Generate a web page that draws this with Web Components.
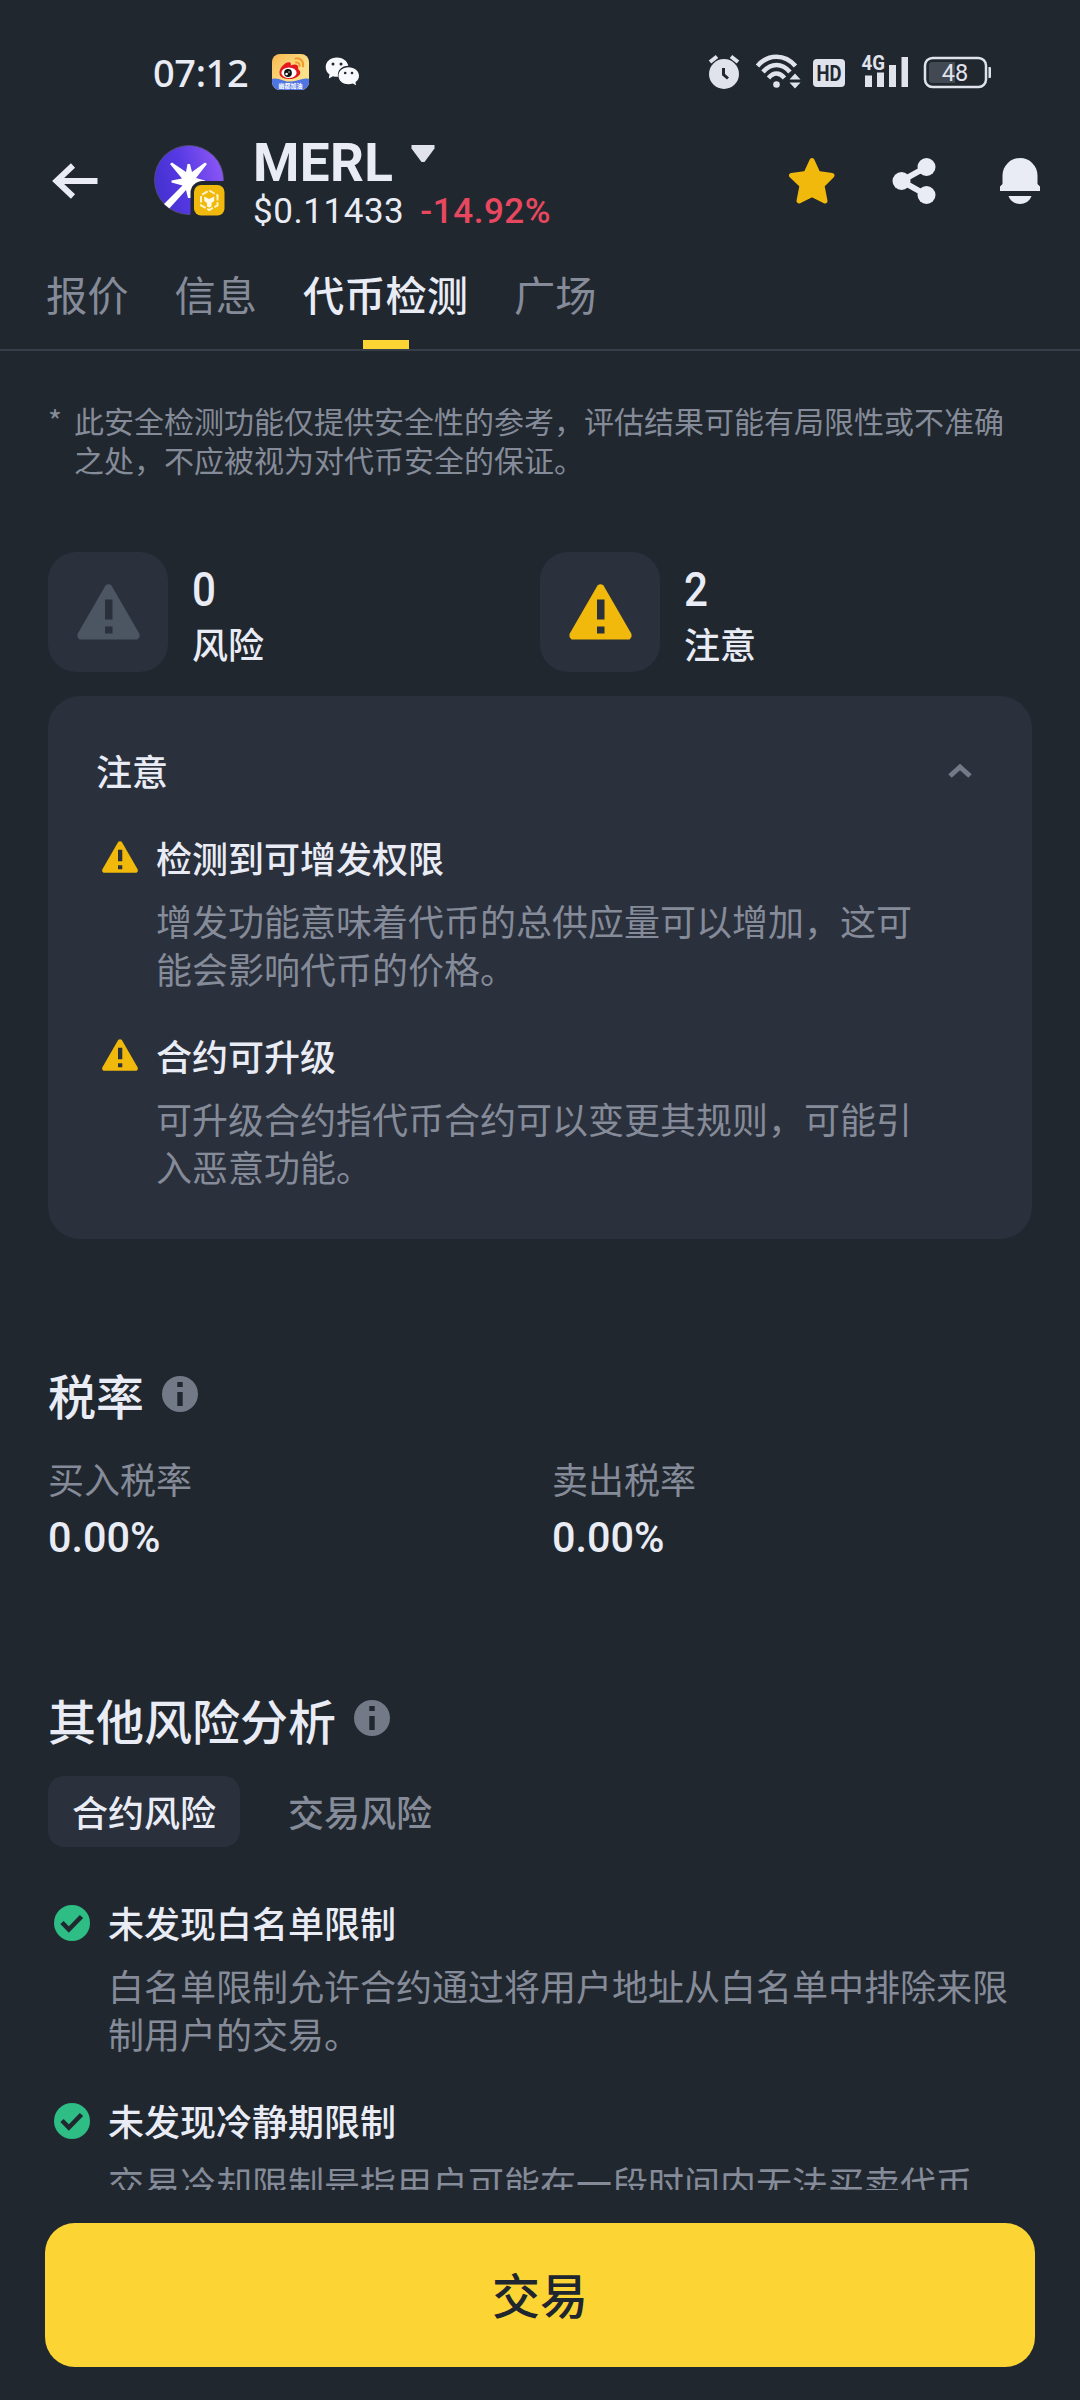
<!DOCTYPE html>
<html lang="zh-CN">
<head>
<meta charset="utf-8">
<title>MERL</title>
<style>
html,body{margin:0;padding:0}
body{width:1080px;height:2400px;overflow:hidden;background:#20272f;color:#e9ecf5;
 --bg:#20272f;--card:#2a303c;--muted:#858b98;--yellow:#f0b90b;--num:Roboto,"Noto Sans CJK SC",sans-serif;
 font-family:"Noto Sans CJK SC",sans-serif}
</style>
</head>
<body>
<token-page></token-page>
<script>
function define(name, css, html){
  const t=document.createElement('template');
  t.innerHTML='<style>*{box-sizing:border-box}svg{display:block;flex:none}'+css+'</style>'+html;
  customElements.define(name,class extends HTMLElement{
    constructor(){super();this.attachShadow({mode:'open'}).appendChild(t.content.cloneNode(true));}
  });
}

define('status-bar',`
:host{display:flex;align-items:center;height:112px;padding:32px 89px 0 153px}
.time{font:500 38px/50px "Noto Sans",sans-serif;letter-spacing:-.4px;width:119px;white-space:nowrap}
.wb{margin-right:16px}
.right{margin-left:auto;display:flex;align-items:center}
`,`
<span class="time">07:12</span>
<svg class="wb" width="37" height="36" viewBox="0 0 37 36">
 <defs><linearGradient id="wg" x1="0" y1="0" x2="1" y2="1"><stop offset="0" stop-color="#f9b84d"/><stop offset=".6" stop-color="#fbe08a"/></linearGradient>
 <clipPath id="wc"><rect width="37" height="36" rx="8"/></clipPath></defs>
 <g clip-path="url(#wc)"><rect width="37" height="36" fill="url(#wg)"/>
 <path d="M0 25C7 23 11 28 18 27.500C25 28 31 23 37 25V36H0Z" fill="#4f74e4"/></g>
 <path d="M7.500 19C7 14 14 7 18 8.500C19 9 19 10 18.700 11.500C22 10 26 10 26 13C26.500 14.500 25.500 15 28 17C30 22 22 25.500 16.500 25C11 24.800 7.500 22.500 7.500 19Z" fill="#e3191e"/>
 <ellipse cx="17" cy="18.800" rx="7.600" ry="5.200" fill="#fff"/><circle cx="16" cy="19" r="3.900" fill="#111"/><circle cx="14.600" cy="20" r="1.300" fill="#fff"/><circle cx="17" cy="18" r=".7" fill="#fff"/>
 <path d="M24 8.500C26.500 8.200 28 10 27.500 12M23.500 4.500C28.500 3.500 32 7.500 31 12.500" fill="none" stroke="#f39a2d" stroke-width="2" stroke-linecap="round"/>
 <text x="18.500" y="34" text-anchor="middle" font-size="6" font-weight="700" fill="#fff">幽都加油</text>
</svg>
<svg width="35" height="32" viewBox="0 0 35 32">
 <path d="M12 1.500C5.500 1.500 .7 5.500 .7 11C.7 14 2 16.500 4.500 18.500L3.800 22.500L8 20.300C10 20.800 12 21 13 20.700C12 14 17 9.800 23.400 9.800C22 4.500 17.500 1.500 12 1.500Z" fill="#f7f9fd"/>
 <path d="M23.500 11.300C17.500 11.300 13.500 15 13.500 19.800C13.500 25 18 28.300 23.500 28.300C25 28.300 26.500 28 27.800 27.500L31 29.300L30.500 26C33 24.500 34 22.300 34 19.800C34 15 29.500 11.300 23.500 11.300Z" fill="#f7f9fd"/>
 <g fill="#20272f"><circle cx="8" cy="8" r="1.500"/><circle cx="16" cy="8" r="1.500"/><circle cx="20.200" cy="17" r="1.300"/><circle cx="27" cy="17" r="1.300"/></g>
</svg>
<div class="right">
<svg width="283" height="40" viewBox="708 52 283 40" fill="#e0e3eb">
 <circle cx="724" cy="74" r="15"/><path d="M710 62L717 56.500M731 56.500L738 62" stroke="#e0e3eb" stroke-width="4"/><path d="M723.500 68V74.500L728 78.500" fill="none" stroke="#20272f" stroke-width="3"/>
 <g fill="none" stroke="#e0e3eb" stroke-width="4.500"><path d="M757.500 66C768 53.500 785 53.500 795.500 66"/><path d="M763 72C771 62.500 782 62.500 790 72"/><path d="M768.500 78C773.500 72 779.500 72 784.500 78"/></g>
 <circle cx="776.500" cy="84.500" r="3.300"/>
 <path d="M789.500 79.500L795 73.500L800.500 79.500ZM789.500 82.500H800.500L795 88.500Z"/>
 <rect x="813" y="59" width="32" height="28" rx="4"/><text x="829" y="81.200" text-anchor="middle" font-family="Roboto,sans-serif" font-weight="700" font-size="22.500" textLength="25" lengthAdjust="spacingAndGlyphs" fill="#20272f">HD</text>
 <text x="861.500" y="70" font-family="Roboto,sans-serif" font-weight="700" font-size="20.500" textLength="23.500" lengthAdjust="spacingAndGlyphs">4G</text>
 <path d="M865 75.500h7v11.500h-7zM877 72.500h7v14.500h-7zM889 65h7v22h-7zM901.500 57h6.500v30h-6.500z"/>
 <rect x="925" y="58" width="61" height="29" rx="7.500" fill="none" stroke="#e0e3eb" stroke-width="2.500"/>
 <path d="M932 62h23v21h-23a3 3 0 0 1-3-3V65a3 3 0 0 1 3-3z" fill="#434953"/>
 <path d="M988.500 67h1.500a1 1 0 0 1 1 1v9a1 1 0 0 1-1 1h-1.500z"/>
 <text x="955" y="80.800" text-anchor="middle" font-family="Roboto,sans-serif" font-size="23.500">48</text>
</svg>
</div>`);

define('token-header',`
:host{display:flex;align-items:center;height:138px;padding-left:52px;font-family:var(--num)}
.logo{margin:-1px 0 0 56px}
.txt{margin-left:27px;height:94px;margin-top:7px}
.name{display:flex;height:53px;gap:18px;font-size:53px;line-height:51px;font-weight:700;letter-spacing:.4px}
.price{display:flex;gap:16px;font-size:35px;line-height:41px;letter-spacing:.55px}
.chg{color:#e8485f;font-weight:500}
.acts{margin-left:auto;display:flex;margin-right:39px}
`,`
<svg width="46" height="38" viewBox="0 0 46 38"><path d="M21 3.500L4.500 19L21 34.500M4.500 19H45.500" fill="none" stroke="#e9ecf5" stroke-width="6"/></svg>
<svg class="logo" width="72" height="72" viewBox="0 0 72 72">
 <defs><linearGradient id="mg" x1="0" y1=".7" x2="1" y2=".4"><stop offset="0" stop-color="#4430cf"/><stop offset=".45" stop-color="#5539e2"/><stop offset="1" stop-color="#8b56f5"/></linearGradient>
 <clipPath id="mc"><circle cx="35" cy="35" r="34.500"/></clipPath></defs>
 <circle cx="35" cy="35" r="34.500" fill="url(#mg)" stroke="#55536f" stroke-width=".8"/>
 <g clip-path="url(#mc)"><path d="M8 61L28.500 40.500L17.500 37.500V35.500L28 33.500L16 19L18 17.500L32 27L33.500 19H36L38 27L51 17.500L53 19L42 33L51 35.500V37.500L43 39L37 53H34L32 45L13 66Z" fill="#fff"/></g>
 <path d="M36.500 72V48a12 12 0 0 1 12-12H72V72Z" fill="#20272f"/>
 <rect x="40" y="40" width="30.500" height="30.500" rx="7" fill="#f0b90b"/>
 <path d="M55.200 45.500L63.500 50.300V60.300L55.200 65L47 60.300V50.300Z" fill="none" stroke="#fff3c8" stroke-width="2" stroke-dasharray="6.500 1.800"/>
 <path d="M50.200 51.500L55.200 54L60.200 51.500V56L57.500 58V61.500L55.200 62.500L53 61.500V58L50.200 56Z" fill="#fffbe8"/>
</svg>
<div class="txt">
 <div class="name"><span>MERL</span><svg width="24" height="28" viewBox="0 0 24 28"><path d="M.5 5H23.500V8.500L13.500 22H10.500L.5 8.500Z" fill="#e0e3ec" transform="translate(0 2)"/></svg></div>
 <div class="price"><span>$0.11433</span><span class="chg">-14.92%</span></div>
</div>
<div class="acts">
<svg width="252" height="50" viewBox="789 156 252 50" fill="#e9ecf5">
 <path d="M812 160.500L818 173.500L832 175.500L822 185.500L825 201L812 194.500L799 201L802 185.500L791.500 175.500L806 173.500Z" fill="#f0b90b" stroke="#f0b90b" stroke-width="5" stroke-linejoin="round"/>
 <path d="M926.500 167L901.500 181L926.500 195" fill="none" stroke="#e9ecf5" stroke-width="6"/><circle cx="901.500" cy="181" r="9"/><circle cx="926.500" cy="167" r="9"/><circle cx="926.500" cy="195" r="9"/>
 <path d="M1002.500 184V175.500a17.500 17.500 0 0 1 35 0V184L1040 186.500V191H1000V186.500Z"/><path d="M1008.500 196H1031.500C1028 206.500 1012 206.500 1008.500 196Z"/>
</svg>
</div>`);

define('tab-item',`
:host{display:flex;flex-direction:column;align-items:center;color:var(--muted);font-size:41.250px}
:host([active]){color:#e9ecf5}:host([active]) .l{font-weight:500}
.l{height:90px;line-height:87px}
.b{width:46px;height:9px}:host([active]) .b{background:#fcd535}
`,`<div class="l"><slot></slot></div><div class="b"></div>`);
define('tab-bar',`:host{display:flex;height:101px;gap:46px;padding-left:46px;border-bottom:2px solid #363e49}`,`<slot></slot>`);

const WARN='<path d="M28.500 1.500Q31.500 -1 34.500 1.500L62.500 50V53L60.500 55.500H2.500L.5 53V50Z"/>';
define('warn-icon',`:host{display:block;width:63px;height:56px;color:var(--yellow)}svg{width:100%;height:100%}`,
`<svg viewBox="0 0 63 56" preserveAspectRatio="none" fill="currentColor">${WARN}<path d="M28 15.500h7.500v20H28zM28 42.500h7.500v7H28z" fill="#2a303c"/></svg>`);
define('info-icon',`:host{display:block;width:36px;height:36px}`,
`<svg width="36" height="36" viewBox="0 0 36 36"><circle cx="18" cy="18" r="18" fill="#727987"/><path d="M15.300 6h5.400v5h-5.400zM15.300 16h5.400v14h-5.400z" fill="#20272f"/></svg>`);
define('check-icon',`:host{display:block;width:36px;height:36px}`,
`<svg width="36" height="36" viewBox="0 0 36 36"><circle cx="18" cy="18" r="18" fill="#2dbd85"/><path d="M8 17.500L14.800 24.500L27.500 11.500" fill="none" stroke="#20272f" stroke-width="4.600"/></svg>`);

define('stat-tile',`
:host{display:flex;width:492px}
.box{width:120px;height:120px;border-radius:28px;background:var(--card);display:flex;align-items:center;justify-content:center}
:host([dim]) warn-icon{color:#4c5562}
.t{margin-left:24px;padding-top:12px}
.n{font:500 49px/51px var(--num);height:51px;transform:scaleX(.86);transform-origin:0 0}
.l{font-size:36px;line-height:50px;font-weight:500;padding-top:3px}
`,`<div class="box"><warn-icon></warn-icon></div><div class="t"><div class="n"><slot name="n"></slot></div><div class="l"><slot></slot></div></div>`);

define('finding-item',`
:host{display:flex;font-size:36px}
.ic{flex:none;width:54px;padding-top:var(--ict,9px)}
.ic ::slotted(warn-icon){width:36px;height:32px}
.t{font-weight:500;line-height:50px;height:50px;margin-bottom:13.500px;color:#e9ecf5}
.d{line-height:48px;color:var(--muted)}
`,`<div class="ic"><slot name="icon"></slot></div><div><div class="t"><slot name="title"></slot></div><div class="d"><slot></slot></div></div>`);

define('notice-card',`
:host{display:block;margin:24px 0 0;width:984px;height:543px;border-radius:32px;background:var(--card);padding:50px 48px 0}
.h{display:flex;justify-content:space-between;align-items:center;height:48px;font-size:36px;font-weight:500;padding-right:12px}
.list{display:flex;flex-direction:column;gap:38.500px;margin:38px 60px 0 6px}
`,`<div class="h"><slot name="title"></slot><svg width="24" height="15" viewBox="0 0 24 15"><path d="M2 13L12 4L22 13" fill="none" stroke="#737b89" stroke-width="5"/></svg></div><div class="list"><slot></slot></div>`);

define('section-title',`:host{display:flex;align-items:center;gap:18px;font-size:48px;line-height:60px;height:60px;font-weight:500}info-icon{margin-top:-1px}`,
`<span><slot></slot></span><info-icon></info-icon>`);
define('tax-cell',`:host{display:block;flex:none;width:504px}.l{font-size:36px;line-height:50px;color:var(--muted)}.v{font:500 42px/50px var(--num);margin-top:10px;transform:scaleX(.985);transform-origin:0 0}`,
`<div class="l"><slot></slot></div><div class="v"><slot name="v"></slot></div>`);
define('risk-chip',`:host{display:block;height:71px;line-height:70px;padding:0 24px;font-size:36px;font-weight:500;border-radius:16px;color:var(--muted)}:host([active]){background:var(--card);color:#e9ecf5}`,`<slot></slot>`);
define('trade-button',`:host{display:block;height:144px;border-radius:30px;background:#fcd535;color:#202630;font-size:48px;font-weight:500;line-height:141px;text-align:center}`,`<slot></slot>`);

define('token-page',`
:host{display:flex;flex-direction:column;width:1080px;height:2400px;background:var(--bg)}
main{height:1839px;overflow:hidden;padding:50px 48px 0}
.note{display:flex;font-size:30px;line-height:39px;color:var(--muted);height:78px}
.note i{font:400 30px/39px "Noto Sans CJK SC",sans-serif;width:26px;flex:none}
.note p{margin:0;width:940px}
.stats{display:flex;margin-top:73px}
.tax{display:flex;margin-top:28.500px}
.s1{margin-top:125px}.s2{margin-top:126px}
.chips{display:flex;gap:24px;margin-top:27.500px}
.list{display:flex;flex-direction:column;gap:38px;margin:50px 0 0 6px;--ict:8px}
footer{padding:33px 45px}
`,`
<status-bar></status-bar>
<token-header></token-header>
<tab-bar><tab-item>报价</tab-item><tab-item>信息</tab-item><tab-item active>代币检测</tab-item><tab-item>广场</tab-item></tab-bar>
<main>
 <div class="note"><i>*</i><p>此安全检测功能仅提供安全性的参考，评估结果可能有局限性或不准确<br>之处，不应被视为对代币安全的保证。</p></div>
 <div class="stats"><stat-tile dim><span slot="n">0</span>风险</stat-tile><stat-tile><span slot="n">2</span>注意</stat-tile></div>
 <notice-card><span slot="title">注意</span>
  <finding-item><warn-icon slot="icon"></warn-icon><span slot="title">检测到可增发权限</span>增发功能意味着代币的总供应量可以增加，这可<br>能会影响代币的价格。</finding-item>
  <finding-item><warn-icon slot="icon"></warn-icon><span slot="title">合约可升级</span>可升级合约指代币合约可以变更其规则，可能引<br>入恶意功能。</finding-item>
 </notice-card>
 <section-title class="s1">税率</section-title>
 <div class="tax"><tax-cell>买入税率<span slot="v">0.00%</span></tax-cell><tax-cell>卖出税率<span slot="v">0.00%</span></tax-cell></div>
 <section-title class="s2">其他风险分析</section-title>
 <div class="chips"><risk-chip active>合约风险</risk-chip><risk-chip>交易风险</risk-chip></div>
 <div class="list">
  <finding-item><check-icon slot="icon"></check-icon><span slot="title">未发现白名单限制</span>白名单限制允许合约通过将用户地址从白名单中排除来限<br>制用户的交易。</finding-item>
  <finding-item><check-icon slot="icon"></check-icon><span slot="title">未发现冷静期限制</span>交易冷却限制是指用户可能在一段时间内无法买卖代币</finding-item>
 </div>
</main>
<footer><trade-button>交易</trade-button></footer>`);
</script>
</body>
</html>
